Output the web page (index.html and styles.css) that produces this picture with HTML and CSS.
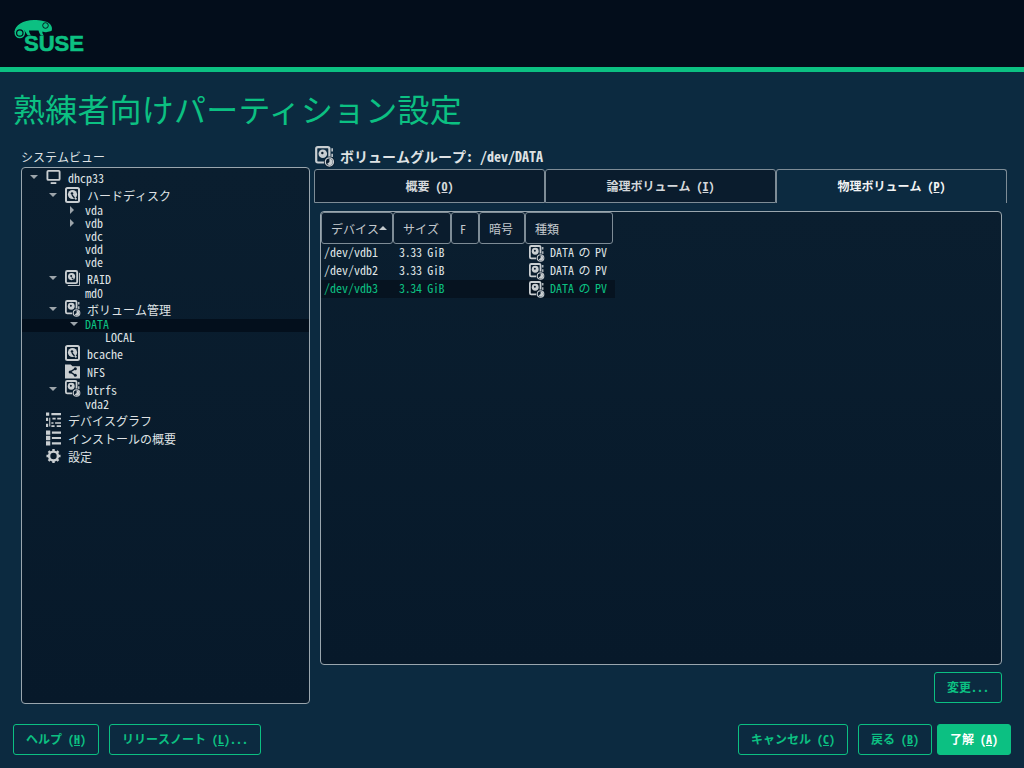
FILE: index.html
```html
<!DOCTYPE html>
<html lang="ja">
<head>
<meta charset="utf-8">
<title>熟練者向けパーティション設定</title>
<link rel="stylesheet" href="styles.css">
</head>
<body>
<svg class="defs" width="0" height="0" aria-hidden="true">
  <symbol id="i-disk" viewBox="0 0 15 16">
    <rect x="1" y="1" width="13" height="14" rx="1.500" fill="none" stroke="#c9ced1" stroke-width="2"/>
    <circle cx="7.500" cy="7.500" r="4.600" fill="#c9ced1"/>
    <circle cx="7" cy="6.500" r="1.300" fill="#0a1c2d"/>
    <path d="M7 8l2.500 3" stroke="#0a1c2d" stroke-width="1.300"/>
    <circle cx="10.800" cy="11.800" r="1" fill="#c9ced1"/>
  </symbol>
  <symbol id="i-raid" viewBox="0 0 16 17">
    <rect x="1" y="1" width="12" height="13" rx="1.500" fill="none" stroke="#c9ced1" stroke-width="2"/>
    <circle cx="7" cy="7" r="3.800" fill="#c9ced1"/>
    <circle cx="6.600" cy="6.400" r="1.100" fill="#0a1c2d"/>
    <path d="M7 8l2 2" stroke="#0a1c2d" stroke-width="1.100"/>
    <path d="M15.500 3v13.500H3" fill="none" stroke="#c9ced1"/>
  </symbol>
  <symbol id="i-vol" viewBox="0 0 18 20">
    <rect x="1" y="1" width="12" height="14" rx="1.500" fill="none" stroke="#c9ced1" stroke-width="2"/>
    <circle cx="7" cy="7" r="3.900" fill="#c9ced1"/>
    <circle cx="6.600" cy="6.400" r="1.100" fill="#0a1c2d"/>
    <path d="M15.500 2v3M15.500 7v3" stroke="#c9ced1" stroke-width="1.400"/>
    <circle cx="13" cy="14.500" r="5" fill="#0a1c2d"/>
    <circle cx="13" cy="14.500" r="3.700" fill="none" stroke="#c9ced1" stroke-width="1.200"/>
    <path d="M13 14.500V11.500A3 3 0 0 1 13 17.500L10.800 16.300z" fill="#c9ced1"/>
  </symbol>
  <symbol id="i-pc" viewBox="0 0 16 16">
    <rect x="1.500" y="1.500" width="13" height="9.500" rx="1" fill="none" stroke="#c9ced1" stroke-width="2"/>
    <path d="M5 14.500h6" stroke="#c9ced1" stroke-width="2"/>
  </symbol>
  <symbol id="i-nfs" viewBox="0 0 16 16">
    <path d="M0 1h6l2 2h8v13H0z" fill="#c9ced1"/>
    <path d="M11 5.500L5.500 9l5.500 3.500" fill="none" stroke="#0a1c2d" stroke-width="1.500"/>
    <circle cx="11" cy="5.500" r="1.600" fill="#0a1c2d"/>
    <circle cx="5.500" cy="9" r="1.600" fill="#0a1c2d"/>
    <circle cx="11" cy="12.500" r="1.600" fill="#0a1c2d"/>
  </symbol>
  <symbol id="i-graph" viewBox="0 0 14 14">
    <path d="M0 0h3v3H0zM5 0.500h9v2H5zM3 5h1v8H3zM6 5h3v1.500H6zM10.500 5h3.500v1.500h-3.500zM5 9h2v1.500H5zM8.500 9h5.500v1.500H8.500zM5 12h3v1.500H5zM10 12h4v1.500h-4z" fill="#c9ced1"/>
    <path d="M0 5h2v3H0zM0 10.500h2v3H0z" fill="#c9ced1"/>
  </symbol>
  <symbol id="i-list" viewBox="0 0 14 14">
    <path d="M0 0h4v4H0zM0 5h4v4H0zM0 10h4v4H0zM5.500 1h8.500v2H5.500zM5.500 6h8.500v2H5.500zM5.500 11h8.500v2H5.500z" fill="#c9ced1"/>
  </symbol>
  <symbol id="i-gear" viewBox="0 0 16 16">
    <circle cx="8" cy="8" r="4.700" fill="none" stroke="#c9ced1" stroke-width="2.600"/>
    <path d="M8 0.500v3M8 12.500v3M0.500 8h3M12.500 8h3M2.700 2.700l2.100 2.100M11.200 11.200l2.100 2.100M2.700 13.300l2.100-2.100M11.200 4.800l2.100-2.100" stroke="#c9ced1" stroke-width="2.600"/>
  </symbol>
</svg>

<header class="topbar">
  <div class="logo">
    <svg class="logo-mark" viewBox="0 0 40 20" width="40" height="20" aria-hidden="true">
      <path d="M0.500 12C1 5 9 0 20 0c6 0 13 1 16 4 2 2 2.500 5 1.500 7l-4.500 1c-2 .500-3 0-4.500-.500-.500 1.500.500 3 1.500 4h-3c-1.500-1.500-2-3.500-2.500-5h-9.500c0 1.500 1 3.500 2 5h-3c-2-2-3-6-6-6-3 0-4 1.500-4 3.500-1-.5-1-1-.5-1z" fill="#0cc082"/>
      <circle cx="5.800" cy="13" r="5.300" fill="#0cc082"/>
      <circle cx="5.800" cy="13" r="3.200" fill="none" stroke="#030d1b" stroke-width="1.200"/>
      <circle cx="31.500" cy="5.500" r="2.800" fill="none" stroke="#030d1b" stroke-width="0.900"/>
    </svg>
    <span class="logo-word">SUSE</span>
  </div>
</header>
<div class="accent"></div>

<main class="page">
  <h1 class="title">熟練者向けパーティション設定</h1>
  <div class="columns">
    <section class="pane-left">
      <div class="left-label">システムビュー</div>
      <div class="tree">
        <div class="row big l0"><span class="arrow down"></span><svg class="ic"><use href="#i-pc"/></svg><span>dhcp33</span></div>
        <div class="row big l1"><span class="arrow down"></span><svg class="ic"><use href="#i-disk"/></svg><span class="lbl">ハードディスク</span></div>
        <div class="row l2"><span class="arrow right"></span><span>vda</span></div>
        <div class="row l2"><span class="arrow right"></span><span>vdb</span></div>
        <div class="row l2"><span class="arrow"></span><span>vdc</span></div>
        <div class="row l2"><span class="arrow"></span><span>vdd</span></div>
        <div class="row l2"><span class="arrow"></span><span>vde</span></div>
        <div class="row big l1"><span class="arrow down"></span><svg class="ic"><use href="#i-raid"/></svg><span class="lbl">RAID</span></div>
        <div class="row l2"><span class="arrow"></span><span>md0</span></div>
        <div class="row big l1"><span class="arrow down"></span><svg class="ic ic-vol"><use href="#i-vol"/></svg><span class="lbl">ボリューム管理</span></div>
        <div class="row l2 sel"><span class="arrow down"></span><span>DATA</span></div>
        <div class="row l3"><span>LOCAL</span></div>
        <div class="row big l1"><span class="arrow"></span><svg class="ic"><use href="#i-disk"/></svg><span class="lbl">bcache</span></div>
        <div class="row big l1"><span class="arrow"></span><svg class="ic"><use href="#i-nfs"/></svg><span class="lbl">NFS</span></div>
        <div class="row big l1"><span class="arrow down"></span><svg class="ic ic-vol"><use href="#i-vol"/></svg><span class="lbl">btrfs</span></div>
        <div class="row l2"><span class="arrow"></span><span>vda2</span></div>
        <div class="row big l0"><span class="arrow"></span><svg class="ic"><use href="#i-graph"/></svg><span>デバイスグラフ</span></div>
        <div class="row big l0"><span class="arrow"></span><svg class="ic"><use href="#i-list"/></svg><span>インストールの概要</span></div>
        <div class="row big l0"><span class="arrow"></span><svg class="ic"><use href="#i-gear"/></svg><span>設定</span></div>
      </div>
    </section>

    <section class="pane-right">
      <div class="heading"><svg class="heading-ic"><use href="#i-vol"/></svg><span>ボリュームグループ: /dev/DATA</span></div>
      <div class="tabs">
        <div class="tab">概要 (<u>O</u>)</div>
        <div class="tab">論理ボリューム (<u>I</u>)</div>
        <div class="tab active">物理ボリューム (<u>P</u>)</div>
      </div>
      <div class="tab-body">
        <div class="table-box">
          <div class="thead">
            <div class="th c1">デバイス<span class="sort"></span></div>
            <div class="th c2">サイズ</div>
            <div class="th c3">F</div>
            <div class="th c4">暗号</div>
            <div class="th c5">種類</div>
          </div>
          <div class="tr"><div class="td c1">/dev/vdb1</div><div class="td c2">3.33 GiB</div><div class="td c3"></div><div class="td c4"></div><div class="td c5"><svg class="ic-row"><use href="#i-vol"/></svg>DATA の PV</div></div>
          <div class="tr"><div class="td c1">/dev/vdb2</div><div class="td c2">3.33 GiB</div><div class="td c3"></div><div class="td c4"></div><div class="td c5"><svg class="ic-row"><use href="#i-vol"/></svg>DATA の PV</div></div>
          <div class="tr cur"><div class="td c1">/dev/vdb3</div><div class="td c2">3.34 GiB</div><div class="td c3"></div><div class="td c4"></div><div class="td c5"><svg class="ic-row"><use href="#i-vol"/></svg>DATA の PV</div></div>
        </div>
        <div class="change-row"><button class="btn change">変更...</button></div>
      </div>
    </section>
  </div>

  <footer class="footer">
    <button class="btn help">ヘルプ (<u>H</u>)</button>
    <button class="btn notes">リリースノート (<u>L</u>)...</button>
    <span class="spacer"></span>
    <button class="btn cancel">キャンセル (<u>C</u>)</button>
    <button class="btn back">戻る (<u>B</u>)</button>
    <button class="btn ok">了解 (<u>A</u>)</button>
  </footer>
</main>
</body>
</html>
```

FILE: styles.css
```css
* { box-sizing: border-box; }
html, body { margin: 0; height: 768px; overflow: hidden; }
body {
  background: #0c2a40;
  color: #dfe2e4;
  font-family: "Noto Sans Mono CJK JP", "Noto Sans CJK JP", sans-serif;
  font-size: 12px;
  line-height: 13px;
  display: flex;
  flex-direction: column;
}
.defs { display: block; height: 0; }

.topbar { height: 67px; background: #030d1b; padding: 20px 0 0 14px; flex: none; }
.logo { display: flex; flex-direction: column; width: 72px; }
.logo-mark { display: block; margin-bottom: -4px; }
.logo-word {
  font-family: "Liberation Sans", sans-serif;
  font-weight: 700;
  font-size: 22px;
  line-height: 16px;
  -webkit-text-stroke: 0.6px #0cc082;
  color: #0cc082;
  margin-left: 10px;
}
.accent { height: 5px; background: #0cc082; flex: none; }

.page { flex: 1; display: flex; flex-direction: column; min-height: 0; padding: 0 13px 13px; }
.title {
  margin: 18px 0 0;
  font-family: "Noto Sans CJK JP", sans-serif;
  font-weight: 400;
  font-size: 32px;
  line-height: 37px;
  letter-spacing: 0.2px;
  color: #0cc082;
}
.columns { display: flex; height: 558px; margin-top: 19px; }
.pane-left { width: 301px; padding-left: 8px; display: flex; flex-direction: column; flex: none; }
.left-label { height: 21px; padding-top: 4px; }
.tree {
  flex: 1;
  padding-top: 1px;
  background: linear-gradient(#0a1e2f, #07192a);
  border: 1px solid #9aa6ae;
  border-radius: 4px;
  width: 289px;
}
.row { display: flex; align-items: center; height: 13px; padding-bottom: 4px; }
.row.big { height: 18px; padding-bottom: 2px; }
.l0 { padding-left: 5px; }
.l1 { padding-left: 24px; }
.l2 { padding-left: 44px; }
.l3 { padding-left: 83px; }
.sel { background: #030f1c; color: #0cc082; }
.arrow { width: 14px; flex: none; display: flex; align-items: center; justify-content: center; }
.arrow.down::before {
  content: "";
  border-left: 4px solid transparent;
  border-right: 4px solid transparent;
  border-top: 4px solid #9da5ab;
}
.arrow.right::before {
  content: "";
  border-top: 4px solid transparent;
  border-bottom: 4px solid transparent;
  border-left: 4px solid #9da5ab;
}
.l2 .arrow { width: 19px; justify-content: flex-start; padding-left: 4px; }
.ic { width: 15px; height: 16px; flex: none; margin: 0 7px 0 5px; }
.ic-vol { width: 16px; height: 18px; margin-right: 6px; }

.pane-right { width: 693px; display: flex; flex-direction: column; flex: none; }
.heading { height: 22px; display: flex; align-items: center; font-weight: 700; font-size: 14px; padding: 0 0 3px 1px; margin-top: 1px; flex: none; }
.heading-ic { width: 20px; height: 22px; margin-right: 5px; flex: none; }
.tabs { display: flex; height: 34px; flex: none; }
.tab {
  width: 231px;
  display: flex;
  align-items: center;
  justify-content: center;
  background: #0a1c2d;
  border: 1px solid #7e8c96;
  border-radius: 3px 3px 0 0;
  font-weight: 700;
  color: #d4d8db;
  font-size: 12px;
  padding-bottom: 2px;
}
.tab.active { background: #0c2a40; border-bottom: 0; color: #f2f3f4; }
.tab-body { flex: 1; display: flex; flex-direction: column; padding: 8px 5px 0 6px; }
.table-box {
  height: 454px;
  flex: none;
  background: linear-gradient(#0a1e2f, #07192a);
  border: 1px solid #9aa6ae;
  border-radius: 4px;
}
.thead { display: flex; height: 32px; }
.th {
  height: 32px;
  display: flex;
  align-items: center;
  padding-left: 9px;
  border: 1px solid #7e8c96;
  border-radius: 3px;
  background: #0a1c2d;
  color: #c4c9cd;
}
.th.c3 { padding-left: 8px; }
.c1 { width: 72px; }
.c2 { width: 58px; }
.c3 { width: 28px; }
.c4 { width: 46px; }
.c5 { width: 88px; }
.sort { border-left: 4px solid transparent; border-right: 4px solid transparent; border-bottom: 4px solid #c4c9cd; }
.tr { display: flex; height: 18px; width: 294px; align-items: center; padding-bottom: 3px; }
.td { padding-left: 3px; display: flex; align-items: center; white-space: pre; }
.td.c2 { padding-left: 6px; letter-spacing: -0.35px; }
.td.c5 { padding-left: 4px; word-spacing: -1.5px; }
.cur { background: #061320; color: #0cc082; }
.ic-row { width: 16px; height: 18px; margin: 4px 5px 0 0; flex: none; }
.change-row { display: flex; justify-content: flex-end; margin-top: 7px; }

.footer { display: flex; gap: 10px; height: 31px; margin-top: 20px; flex: none; }
.spacer { flex: 1; }
.btn {
  height: 31px;
  font: inherit;
  font-weight: 700;
  color: #0cc082;
  background: transparent;
  border: 1px solid #0cc082;
  border-radius: 3px;
  padding: 0 0 2px;
}
.change { width: 68px; }
.help { width: 86px; }
.notes { width: 152px; }
.cancel { width: 110px; }
.back { width: 74px; }
.ok { width: 74px; margin-left: -5px; background: #0cc082; color: #fff; }
```
